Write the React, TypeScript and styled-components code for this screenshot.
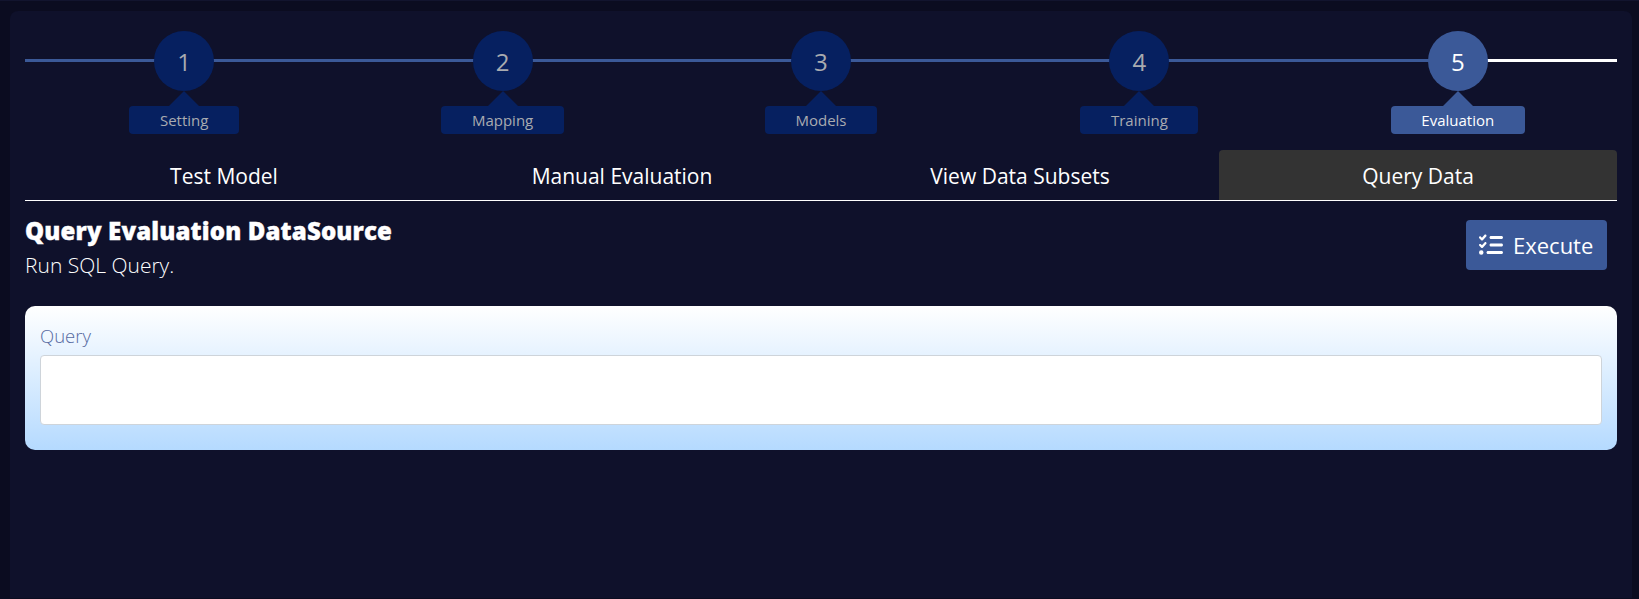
import React from "react";
import styled, { createGlobalStyle } from "styled-components";
import { FaListCheck } from "react-icons/fa6";

const steps = ["Setting", "Mapping", "Models", "Training", "Evaluation"];
const tabs = ["Test Model", "Manual Evaluation", "View Data Subsets", "Query Data"];

const GlobalStyle = createGlobalStyle`
  html, body {
    margin: 0;
    height: 100%;
    background: #0b0c20;
    overflow: hidden;
  }
  * {
    box-sizing: border-box;
  }
`;

const App: React.FC = () => {
  return (
    <>
      <GlobalStyle />
      <Page>
        <Panel>
          <Stepper>
            {steps.map((label, i) => {
              const active = i === steps.length - 1;
              return (
                <Step key={label} $active={active}>
                  <Circle $active={active}>{i + 1}</Circle>
                  <StepLabel $active={active}>{label}</StepLabel>
                </Step>
              );
            })}
          </Stepper>
          <Tabs>
            {tabs.map((tab, i) => (
              <Tab key={tab} $active={i === tabs.length - 1}>
                {tab}
              </Tab>
            ))}
          </Tabs>
          <Header>
            <div>
              <Title>Query Evaluation DataSource</Title>
              <Subtitle>Run SQL Query.</Subtitle>
            </div>
            <ExecuteButton>
              <FaListCheck size={24} />
              Execute
            </ExecuteButton>
          </Header>
          <QueryCard>
            <QueryLabel>Query</QueryLabel>
            <QueryInput />
          </QueryCard>
        </Panel>
      </Page>
    </>
  );
};

const Page = styled.div`
  height: 599px;
  padding: 11px 7px 0 10px;
  border-top: 1px solid #12142e;
  font-family: "Open Sans", "Noto Sans", sans-serif;
`;

const Panel = styled.div`
  height: 100%;
  padding: 20px 15px 0;
  margin-top: -1px;
  background: #0f112b;
  border-radius: 8px 8px 0 0;
`;

const Stepper = styled.div`
  display: grid;
  grid-template-columns: repeat(5, 1fr);
  height: 103px;
`;

const Step = styled.div<{ $active?: boolean }>`
  position: relative;
  display: flex;
  flex-direction: column;
  align-items: center;

  &::before {
    content: "";
    position: absolute;
    top: 28px;
    left: 0;
    right: 0;
    height: 3px;
    background: ${({ $active }) =>
      $active
        ? "linear-gradient(to right, #3b5998 50%, #ffffff 50%)"
        : "#3b5998"};
  }
`;

const Circle = styled.div<{ $active?: boolean }>`
  position: relative;
  display: flex;
  align-items: center;
  justify-content: center;
  width: 60px;
  height: 60px;
  border-radius: 50%;
  font-size: 24px;
  background: ${({ $active }) => ($active ? "#3b5998" : "#062060")};
  color: ${({ $active }) => ($active ? "#ffffff" : "#a9abb0")};
`;

const StepLabel = styled.div<{ $active?: boolean }>`
  position: relative;
  margin-top: 15px;
  height: 28px;
  padding: 0 30.5px;
  border-radius: 4px;
  font-size: 15px;
  line-height: 28px;
  background: ${({ $active }) => ($active ? "#3b5998" : "#062060")};
  color: ${({ $active }) => ($active ? "#ffffff" : "#a9abb0")};

  &::before {
    content: "";
    position: absolute;
    top: -15px;
    left: 50%;
    margin-left: -15px;
    border-left: 15px solid transparent;
    border-right: 15px solid transparent;
    border-bottom: 15px solid
      ${({ $active }) => ($active ? "#3b5998" : "#062060")};
  }
`;

const Tabs = styled.div`
  display: grid;
  grid-template-columns: repeat(4, 1fr);
  margin-top: 16px;
  border-bottom: 1px solid #ffffff;
`;

const Tab = styled.div<{ $active?: boolean }>`
  height: 50px;
  border-radius: 4px 4px 0 0;
  font-size: 21px;
  line-height: 52px;
  text-align: center;
  color: #ffffff;
  background: ${({ $active }) => ($active ? "#333333" : "transparent")};
`;

const Header = styled.div`
  display: flex;
  align-items: flex-start;
  justify-content: space-between;
  padding: 19px 10px 0 0;
`;

const Title = styled.h2`
  margin: -4px 0 0;
  font-size: 24px;
  font-weight: 800;
  line-height: 30px;
  letter-spacing: 0.15px;
  color: #ffffff;
  -webkit-text-stroke: 0.4px #ffffff;
`;

const Subtitle = styled.div`
  margin-top: 6px;
  font-size: 21px;
  font-weight: 300;
  line-height: 26px;
  color: #ffffff;
`;

const ExecuteButton = styled.button`
  display: flex;
  align-items: center;
  gap: 10px;
  width: 141px;
  height: 50px;
  padding: 0 0 0 13px;
  border: none;
  border-radius: 4px;
  font-family: inherit;
  font-size: 22px;
  line-height: 30px;
  color: #ffffff;
  background: #3b5998;

  svg {
    flex-shrink: 0;
  }
`;

const QueryCard = styled.div`
  margin-top: 28px;
  height: 144px;
  padding: 18px 15px 0;
  border-radius: 10px;
  background: linear-gradient(to bottom, #ffffff, #b5daff);
`;

const QueryLabel = styled.div`
  font-size: 18.5px;
  font-weight: 300;
  line-height: 24px;
  color: #56699f;
`;

const QueryInput = styled.div`
  margin-top: 7px;
  height: 70px;
  background: #ffffff;
  border: 1px solid #ced4da;
  border-radius: 4px;
`;

export default App;
